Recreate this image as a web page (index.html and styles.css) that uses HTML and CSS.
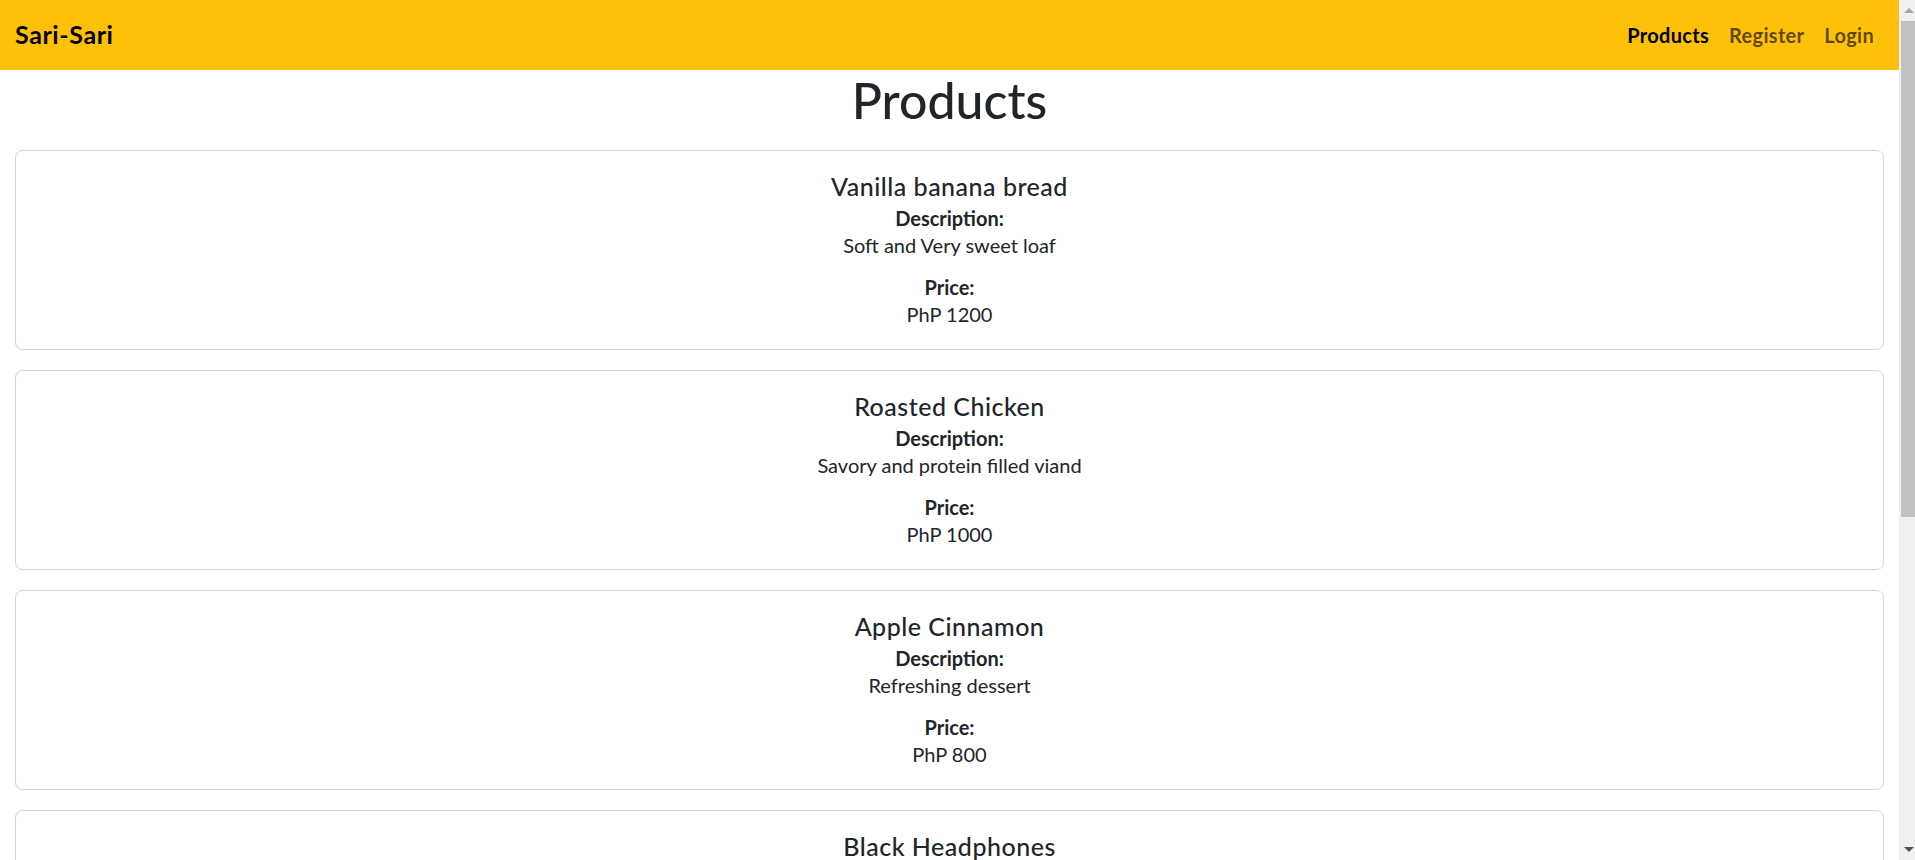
FILE: index.html
```html
<!DOCTYPE html>
<html lang="en">
<head>
<meta charset="utf-8">
<title>Sari-Sari</title>
<link rel="stylesheet" href="styles.css">
</head>
<body>
<div class="window">
  <div class="page">
    <nav class="navbar">
      <a class="brand" href="#">Sari-Sari</a>
      <ul class="nav">
        <li><a class="nav-link active" href="#">Products</a></li>
        <li><a class="nav-link" href="#">Register</a></li>
        <li><a class="nav-link" href="#">Login</a></li>
      </ul>
    </nav>
    <main class="container">
      <h1 class="page-title">Products</h1>
      <div class="card-list">
        <div class="card">
          <h5 class="card-title">Vanilla banana bread</h5>
          <h6 class="card-subtitle">Description:</h6>
          <p class="card-text">Soft and Very sweet loaf</p>
          <h6 class="card-subtitle">Price:</h6>
          <p class="card-text">PhP 1200</p>
        </div>
        <div class="card">
          <h5 class="card-title">Roasted Chicken</h5>
          <h6 class="card-subtitle">Description:</h6>
          <p class="card-text">Savory and protein filled viand</p>
          <h6 class="card-subtitle">Price:</h6>
          <p class="card-text">PhP 1000</p>
        </div>
        <div class="card">
          <h5 class="card-title">Apple Cinnamon</h5>
          <h6 class="card-subtitle">Description:</h6>
          <p class="card-text">Refreshing dessert</p>
          <h6 class="card-subtitle">Price:</h6>
          <p class="card-text">PhP 800</p>
        </div>
        <div class="card">
          <h5 class="card-title">Black Headphones</h5>
          <h6 class="card-subtitle">Description:</h6>
          <p class="card-text">Wireless over-ear headphones</p>
          <h6 class="card-subtitle">Price:</h6>
          <p class="card-text">PhP 1500</p>
        </div>
      </div>
    </main>
  </div>
  <div class="scrollbar" aria-hidden="true">
    <div class="sb-btn"><span class="arrow up"></span></div>
    <div class="sb-track">
      <div class="sb-thumb"></div>
    </div>
    <div class="sb-btn"><span class="arrow down"></span></div>
  </div>
</div>
</body>
</html>
```
FILE: styles.css
```css
* { box-sizing: border-box; }

html, body {
  margin: 0;
  height: 100%;
}

body {
  font-family: "Lato", "Liberation Sans", sans-serif;
  font-size: 20px;
  color: #212529;
  background: #fff;
}

.window {
  display: flex;
  height: 860px;
  overflow: hidden;
}

.page {
  flex: 1;
  min-width: 0;
  overflow: hidden;
}

/* Navbar */
.navbar {
  height: 70px;
  background: #ffc107;
  display: flex;
  align-items: center;
  justify-content: space-between;
  padding: 0 15px;
}

.brand {
  font-size: 25px;
  font-weight: 700;
  line-height: 37.5px;
  letter-spacing: 0.6px;
  color: #000;
  text-decoration: none;
}

.nav {
  list-style: none;
  margin: 0;
  padding: 0;
  display: flex;
}

.nav-link {
  display: block;
  padding: 10px 10px;
  font-size: 20px;
  line-height: 30px;
  font-weight: 700;
  letter-spacing: 0.3px;
  color: rgba(0, 0, 0, 0.65);
  text-decoration: none;
}

.nav-link.active {
  color: #000;
}

/* Content */
.container {
  padding: 0 15px;
}

.page-title {
  margin: 0 0 20px;
  text-align: center;
  font-size: 50px;
  font-weight: 500;
  line-height: 60px;
}

.card-list {
  display: flex;
  flex-direction: column;
  gap: 20px;
}

.card {
  border: 1px solid rgba(0, 0, 0, 0.175);
  border-radius: 7.5px;
  padding: 20px;
  text-align: center;
}

.card-title {
  margin: 0 0 10px;
  font-size: 25px;
  font-weight: 500;
  line-height: 30px;
  letter-spacing: 0.02em;
}

.card-subtitle {
  margin: -5px 0 0;
  font-size: 20px;
  font-weight: 700;
  line-height: 24px;
}

.card-text {
  margin: 0 0 20px;
  line-height: 30px;
}

.card-text:last-child {
  margin-bottom: 0;
}

/* Fake classic scrollbar */
.scrollbar {
  width: 16px;
  background: #f0f0f0;
  display: flex;
  flex-direction: column;
}

.sb-btn {
  height: 21px;
  display: flex;
  align-items: center;
  justify-content: center;
  padding-left: 3px;
}

.sb-track {
  flex: 1;
  padding-left: 2px;
}

.sb-thumb {
  height: 496px;
  background: #c1c1c1;
}

.arrow {
  width: 0;
  height: 0;
  border-left: 5px solid transparent;
  border-right: 5px solid transparent;
}

.arrow.up {
  border-bottom: 5px solid #a3a3a3;
}

.arrow.down {
  border-top: 5px solid #505050;
}
```
